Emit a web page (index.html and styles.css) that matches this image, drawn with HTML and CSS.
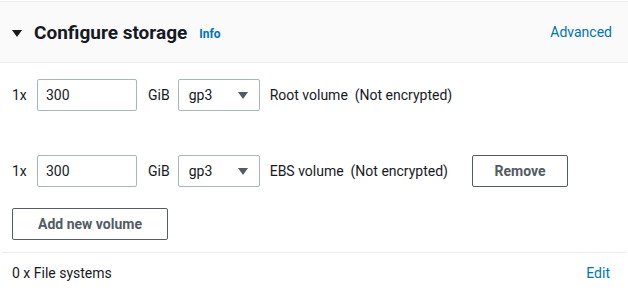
FILE: index.html
```html
<!DOCTYPE html>
<html lang="en">
<head>
    <meta charset="UTF-8">
    <title>Configure storage</title>
    <link rel="stylesheet" href="styles.css">
</head>
<body>
    <div class="panel">
        <!-- Header -->
        <div class="panel-header">
            <div class="panel-title">
                <span class="caret"></span>
                <h2>Configure storage</h2>
                <a href="#" class="info-link">Info</a>
            </div>
            <a href="#" class="link">Advanced</a>
        </div>

        <!-- Volumes -->
        <div class="volumes">
            <div class="volume-row">
                <span class="count">1x</span>
                <input type="text" class="size-input" value="300">
                <span class="unit">GiB</span>
                <div class="select">gp3<span class="select-caret"></span></div>
                <span class="volume-label">Root volume&nbsp;&nbsp;(Not encrypted)</span>
            </div>
            <div class="volume-row second">
                <span class="count">1x</span>
                <input type="text" class="size-input" value="300">
                <span class="unit">GiB</span>
                <div class="select">gp3<span class="select-caret"></span></div>
                <span class="volume-label">EBS volume&nbsp;&nbsp;(Not encrypted)</span>
                <button class="btn remove-btn">Remove</button>
            </div>
            <button class="btn add-btn">Add new volume</button>
        </div>

        <!-- File systems -->
        <div class="panel-footer">
            <span>0 x File systems</span>
            <a href="#" class="link">Edit</a>
        </div>
    </div>
</body>
</html>
```

FILE: styles.css
```css
* {
    margin: 0;
    padding: 0;
    box-sizing: border-box;
}

body {
    font-family: Roboto, 'Liberation Sans', sans-serif;
    font-size: 14px;
    color: #16191f;
    background: #ffffff;
    padding-top: 1px;
}

.panel {
    border-top: 1px solid #eaeded;
}

.panel-header {
    display: flex;
    justify-content: space-between;
    align-items: center;
    height: 61px;
    padding: 0 16px 0 12px;
    background: #fafafa;
    border-bottom: 1px solid #eaeded;
}

.panel-title {
    display: flex;
    align-items: center;
}

.caret {
    width: 0;
    height: 0;
    border-left: 5px solid transparent;
    border-right: 5px solid transparent;
    border-top: 7px solid #16191f;
    margin: 2px 12px 0 0;
}

h2 {
    font-size: 19px;
    font-weight: 700;
    color: #16191f;
}

.info-link {
    font-size: 12px;
    font-weight: 700;
    color: #0073bb;
    text-decoration: none;
    margin: 3px 0 0 12px;
}

.link {
    color: #0073bb;
    text-decoration: none;
    font-size: 14px;
}

.volumes {
    padding: 16px 12px 12px;
    border-bottom: 1px solid #eaeded;
    margin: 0 2px;
}

.volumes .volume-row,
.volumes .add-btn {
    margin-left: -2px;
}

.volume-row {
    display: flex;
    align-items: center;
    height: 32px;
}

.volume-row.second {
    margin-top: 44px;
}

.count {
    width: 25px;
}

.size-input {
    width: 100px;
    height: 32px;
    border: 1px solid #aab7b8;
    border-radius: 2px;
    padding: 0 8px;
    font-family: inherit;
    font-size: 14px;
    color: #16191f;
}

.unit {
    margin: 0 8px 0 11px;
}

.select {
    display: flex;
    justify-content: space-between;
    align-items: center;
    width: 82px;
    height: 32px;
    border: 1px solid #aab7b8;
    border-radius: 2px;
    padding: 0 11px 0 10px;
    font-size: 14px;
}

.select-caret {
    width: 0;
    height: 0;
    border-left: 5px solid transparent;
    border-right: 5px solid transparent;
    border-top: 7px solid #545b64;
}

.volume-label {
    margin-left: 10px;
}

.btn {
    height: 32px;
    background: #ffffff;
    border: 1px solid #545b64;
    border-radius: 2px;
    font-family: inherit;
    font-size: 14px;
    font-weight: 700;
    color: #545b64;
    cursor: pointer;
}

.remove-btn {
    width: 96px;
    margin-left: 24px;
}

.add-btn {
    display: block;
    width: 156px;
    margin-top: 21px;
}

.panel-footer {
    display: flex;
    justify-content: space-between;
    align-items: center;
    padding: 12px 18px 0 12px;
}
```
